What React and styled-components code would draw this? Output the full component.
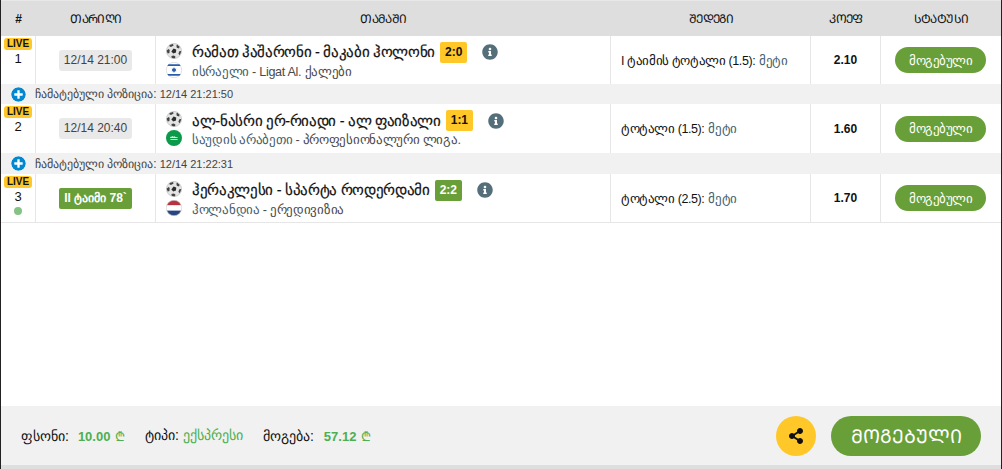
import React from "react";
import styled, { createGlobalStyle } from "styled-components";
import { FaInfoCircle, FaPlusCircle, FaShareAlt } from "react-icons/fa";

const GlobalStyle = createGlobalStyle`
  html, body {
    margin: 0;
    padding: 0;
    background: #fff;
  }
  body {
    font-family: "Liberation Sans", sans-serif;
    font-size: 12px;
    color: #111;
  }
`;

const COLUMNS = "35px 120px 455px 200px 70px 1fr";

const Page = styled.div`
  width: 1002px;
  height: 469px;
  box-sizing: border-box;
  border-left: 1px solid #222;
  border-right: 1px solid #222;
  display: flex;
  flex-direction: column;
  background: #fff;
  overflow: hidden;
`;

const Body = styled.div`
  flex: 1;
`;

const HeaderRow = styled.div`
  display: grid;
  grid-template-columns: ${COLUMNS};
  height: 36px;
  box-sizing: border-box;
  border-top: 1px solid #e8e8e8;
  background: #dedede;
  align-items: center;
  text-align: center;
  font-size: 12px;
  letter-spacing: -0.6px;
`;

const Hash = styled.span`
  font-size: 12px;
  font-weight: 700;
  letter-spacing: 0;
`;

const Row = styled.div`
  display: grid;
  grid-template-columns: ${COLUMNS};
  height: ${({ $h }) => $h}px;
  box-sizing: border-box;
  border-bottom: ${({ $last }) => ($last ? "1px solid #e6e6e6" : "none")};
`;

const Cell = styled.div`
  border-right: 1px solid #e6e6e6;
  display: flex;
  align-items: center;
  justify-content: center;
  &:last-child {
    border-right: none;
  }
`;

const NumCell = styled(Cell)`
  flex-direction: column;
  justify-content: flex-start;
  padding-top: 2px;
  font-size: 13px;
  line-height: 14px;
`;

const LiveBadge = styled.span`
  background: #ffc727;
  border-radius: 3px;
  font-size: 10px;
  font-weight: 700;
  line-height: 12px;
  padding: 0 2.5px;
  margin-bottom: 2px;
  color: #111;
`;

const LiveDot = styled.span`
  width: 8px;
  height: 8px;
  border-radius: 50%;
  background: #83c383;
  margin-top: 3px;
`;

const DateChip = styled.span`
  background: #e9e9e9;
  border-radius: 3px;
  color: #444;
  font-size: 12px;
  padding: 3px 5px;
  line-height: 15px;
`;

const PeriodChip = styled.span`
  background: #689f38;
  border-radius: 2px;
  color: #fff;
  font-weight: 700;
  font-size: 12px;
  padding: 3px 5px;
  line-height: 15px;
`;

const MatchCell = styled(Cell)`
  justify-content: flex-start;
  padding-left: 10px;
  gap: 10px;
`;

const IconColumn = styled.div`
  display: flex;
  flex-direction: column;
  gap: 3px;
  width: 16px;
`;

const MatchInfo = styled.div`
  display: flex;
  flex-direction: column;
  gap: 2px;
`;

const TeamsLine = styled.div`
  display: flex;
  align-items: center;
  height: 21px;
  font-size: 14.5px;
  letter-spacing: -0.33px;
  -webkit-text-stroke: 0.2px #111;
  color: #111;
  white-space: pre;
`;

const Score = styled.span`
  background: ${({ $live }) => ($live ? "#689f38" : "#ffc727")};
  color: ${({ $live }) => ($live ? "#fff" : "#111")};
  -webkit-text-stroke: 0;
  letter-spacing: 0;
  border-radius: 2px;
  font-weight: 700;
  font-size: 12px;
  line-height: 21px;
  padding: 0 5px;
  margin-left: 5px;
`;

const InfoIcon = styled(FaInfoCircle)`
  color: #546e7a;
  font-size: 16px;
  margin-left: 15px;
`;

const LeagueLine = styled.div`
  font-size: 12.6px;
  letter-spacing: -0.3px;
  color: #4a4a4a;
  line-height: 14px;
`;

const Country = styled.span`
  color: #44606e;
`;

const ResultCell = styled(Cell)`
  justify-content: flex-start;
  padding-left: 10px;
  font-size: 12.5px;
  letter-spacing: -0.4px;
`;

const ResultValue = styled.span`
  color: #44606e;
  margin-left: 4px;
`;

const OddCell = styled(Cell)`
  font-weight: 700;
  font-size: 12px;
`;

const WonPill = styled.span`
  width: 91px;
  height: 26px;
  margin-right: 1px;
  border-radius: 13px;
  background: #689f38;
  color: #fff;
  font-size: 12.6px;
  letter-spacing: -0.5px;
  display: flex;
  align-items: center;
  justify-content: center;
`;

const AddedStrip = styled.div`
  height: ${({ $h }) => $h}px;
  background: #f1f1f1;
  display: flex;
  align-items: center;
  padding-left: 10px;
  gap: 9px;
  font-size: 12px;
  color: #444;
`;

const AddedTime = styled.span`
  font-size: 11px;
  margin-left: 3px;
`;

const PlusIcon = styled(FaPlusCircle)`
  color: #0288d1;
  background: #fff;
  border-radius: 50%;
  font-size: 15px;
  flex-shrink: 0;
`;

const Footer = styled.div`
  height: 63px;
  box-sizing: border-box;
  background: #f1f1f1;
  border-bottom: 4px solid #dedede;
  display: flex;
  align-items: center;
  padding: 0 20px;
  font-size: 14px;
`;

const Summary = styled.div`
  display: flex;
  gap: 20px;
  flex: 1;
`;

const SummaryItem = styled.span`
  color: #111;
`;

const SummaryValue = styled.span`
  color: #4caf50;
  font-weight: ${({ $regular }) => ($regular ? 400 : 700)};
  font-size: ${({ $regular }) => ($regular ? 14 : 13)}px;
  margin-left: ${({ $gap }) => $gap}px;
`;

const Lari = styled.span`
  font-weight: 400;
  margin-left: 1px;
`;

const ShareButton = styled.span`
  width: 40px;
  height: 40px;
  border-radius: 50%;
  background: #ffc727;
  display: flex;
  align-items: center;
  justify-content: center;
  font-size: 16px;
  color: #111;
  margin-right: 15px;
`;

const BigWon = styled.span`
  width: 150px;
  height: 40px;
  border-radius: 20px;
  background: #689f38;
  color: #fff;
  font-size: 19px;
  display: flex;
  align-items: center;
  justify-content: center;
`;

const Ball = () => (
  <svg width="16" height="16" viewBox="0 0 16 16">
    <circle cx="8" cy="8" r="7.6" fill="#e4e4e4" stroke="#aaa" strokeWidth="0.5" />
    <path d="M7.6 5.6l2.6 1-.2 2.8-2.7 1-2-2z" fill="#2c2c2c" />
    <path d="M3.6 1.9 7 1l.6 1.6-2.6 1.5-1.6-.8zM11 1.6l2.6 2.2-.5 1.8-2.3-.9-.4-2zM.7 7.4l2-1.5 1 1-.3 3-1.6.6A7.5 7.5 0 0 1 .7 7.4zM15.2 8l-1.9.2-.9 2.6 1.1 1.4A7.5 7.5 0 0 0 15.2 8zM5.4 13l2.4-.6 1.6 1.2-.3 1.7a7.5 7.5 0 0 1-3.4-.6z" fill="#444" />
  </svg>
);

const IsraelFlag = () => (
  <svg width="16" height="16" viewBox="0 0 16 16">
    <circle cx="8" cy="8" r="7.7" fill="#fff" stroke="#ccc" strokeWidth="0.6" />
    <path d="M2.6 2.2h10.8a7.7 7.7 0 0 1 1.2 1.8H1.4a7.7 7.7 0 0 1 1.2-1.8zM1.4 12h13.2a7.7 7.7 0 0 1-1.2 1.8H2.6A7.7 7.7 0 0 1 1.4 12z" fill="#2a5db0" />
    <path d="M8 5.2l2.4 4.1H5.6zM8 10.8 5.6 6.7h4.8z" fill="#2a5db0" />
  </svg>
);

const SaudiFlag = () => (
  <svg width="16" height="16" viewBox="0 0 16 16">
    <circle cx="8" cy="8" r="8" fill="#0a9a4a" />
    <path d="M4 7.6c.6-1.6 1-.3 1.7-1s.8-.8 1.4 0 1.1-.9 1.8-.1 1 .3 3 1.1v.5H4z" fill="#d4f0df" />
    <rect x="4.4" y="9.2" width="7.2" height="0.8" fill="#eaf8f0" />
  </svg>
);

const NetherlandsFlag = () => (
  <svg width="16" height="16" viewBox="0 0 16 16">
    <clipPath id="nl-clip">
      <circle cx="8" cy="8" r="7.7" />
    </clipPath>
    <g clipPath="url(#nl-clip)">
      <rect width="16" height="5.4" fill="#b5333f" />
      <rect y="5.4" width="16" height="5.2" fill="#fff" />
      <rect y="10.6" width="16" height="5.4" fill="#27467f" />
    </g>
    <circle cx="8" cy="8" r="7.7" fill="none" stroke="#ccc" strokeWidth="0.6" />
  </svg>
);

const matches = [
  {
    n: 1,
    date: "12/14 21:00",
    teams: "რამათ ჰაშარონი - მაკაბი ჰოლონი",
    score: "2:0",
    Flag: IsraelFlag,
    country: "ისრაელი",
    league: " - Ligat Al. ქალები",
    result: "I ტაიმის ტოტალი (1.5):",
    odd: "2.10",
    added: "12/14 21:21:50",
    height: 48,
    stripHeight: 20,
  },
  {
    n: 2,
    date: "12/14 20:40",
    teams: "ალ-ნასრი ერ-რიადი - ალ ფაიზალი",
    score: "1:1",
    Flag: SaudiFlag,
    country: "საუდის არაბეთი",
    league: " - პროფესიონალური ლიგა.",
    result: "ტოტალი (1.5):",
    odd: "1.60",
    added: "12/14 21:22:31",
    height: 49,
    stripHeight: 21,
  },
  {
    n: 3,
    period: "II ტაიმი 78`",
    teams: "ჰერაკლესი - სპარტა როდერდამი",
    score: "2:2",
    live: true,
    Flag: NetherlandsFlag,
    country: "ჰოლანდია",
    league: " - ერედივიზია",
    result: "ტოტალი (2.5):",
    odd: "1.70",
    height: 49,
  },
];

export default function App() {
  return (
    <Page>
      <GlobalStyle />
      <Body>
        <HeaderRow>
          <Hash>#</Hash>
          <span>ᲗᲐᲠᲘᲦᲘ</span>
          <span>ᲗᲐᲛᲐᲨᲘ</span>
          <span>ᲨᲔᲓᲔᲒᲘ</span>
          <span>ᲙᲝᲔᲤ</span>
          <span>ᲡᲢᲐᲢᲣᲡᲘ</span>
        </HeaderRow>
        {matches.map((m) => (
          <React.Fragment key={m.n}>
            <Row $h={m.height} $last={!m.added}>
              <NumCell>
                <LiveBadge>LIVE</LiveBadge>
                {m.n}
                {m.live && <LiveDot />}
              </NumCell>
              <Cell>
                {m.period ? <PeriodChip>{m.period}</PeriodChip> : <DateChip>{m.date}</DateChip>}
              </Cell>
              <MatchCell>
                <IconColumn>
                  <Ball />
                  <m.Flag />
                </IconColumn>
                <MatchInfo>
                  <TeamsLine>
                    {m.teams}
                    <Score $live={m.live}>{m.score}</Score>
                    <InfoIcon />
                  </TeamsLine>
                  <LeagueLine>
                    <Country>{m.country}</Country>
                    {m.league}
                  </LeagueLine>
                </MatchInfo>
              </MatchCell>
              <ResultCell>
                {m.result}
                <ResultValue>მეტი</ResultValue>
              </ResultCell>
              <OddCell>{m.odd}</OddCell>
              <Cell>
                <WonPill>მოგებული</WonPill>
              </Cell>
            </Row>
            {m.added && (
              <AddedStrip $h={m.stripHeight}>
                <PlusIcon />
                <span>
                  ჩამატებული პოზიცია:<AddedTime>{m.added}</AddedTime>
                </span>
              </AddedStrip>
            )}
          </React.Fragment>
        ))}
      </Body>
      <Footer>
        <Summary>
          <SummaryItem>
            ფსონი:
            <SummaryValue $gap={9}>
              10.00 <Lari>₾</Lari>
            </SummaryValue>
          </SummaryItem>
          <SummaryItem>
            ტიპი:
            <SummaryValue $gap={4} $regular>
              ექსპრესი
            </SummaryValue>
          </SummaryItem>
          <SummaryItem>
            მოგება:
            <SummaryValue $gap={10}>
              57.12 <Lari>₾</Lari>
            </SummaryValue>
          </SummaryItem>
        </Summary>
        <ShareButton>
          <FaShareAlt />
        </ShareButton>
        <BigWon>ᲛᲝᲒᲔᲑᲣᲚᲘ</BigWon>
      </Footer>
    </Page>
  );
}
